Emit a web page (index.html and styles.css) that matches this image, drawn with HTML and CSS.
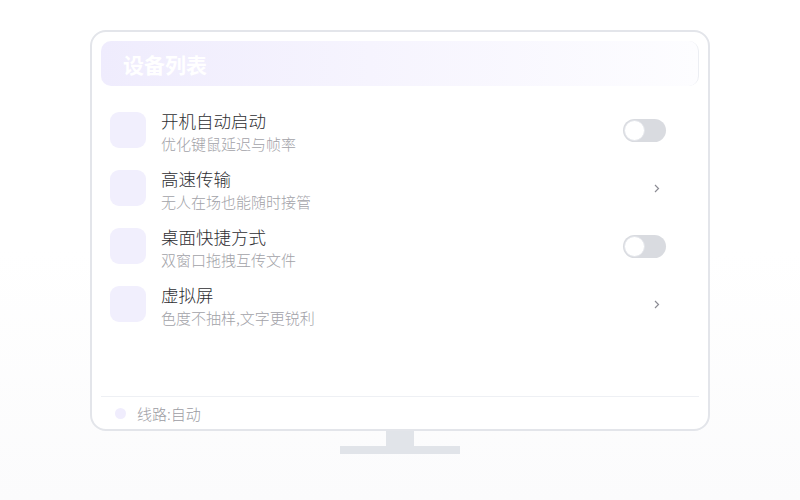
FILE: index.html
```html
<!DOCTYPE html>
<html lang="zh-CN">
<head>
    <meta charset="UTF-8">
    <meta name="viewport" content="width=device-width, initial-scale=1.0">
    <title>设备列表</title>
    <link rel="stylesheet" href="styles.css">
</head>
<body>
    <section class="stage">
        <div class="monitor">
            <div class="header">设备列表</div>
            <div class="list">
                <div class="row">
                    <div class="icon"></div>
                    <div class="text">
                        <div class="title">开机自动启动</div>
                        <div class="sub">优化键鼠延迟与帧率</div>
                    </div>
                    <div class="action"><span class="toggle"><span class="knob"></span></span></div>
                </div>
                <div class="row">
                    <div class="icon"></div>
                    <div class="text">
                        <div class="title">高速传输</div>
                        <div class="sub">无人在场也能随时接管</div>
                    </div>
                    <div class="action">
                        <svg class="chevron" width="6" height="9" viewBox="0 0 6 9"><polyline points="1,1 4.5,4.5 1,8" fill="none" stroke="#8c8c94" stroke-width="1.2"/></svg>
                    </div>
                </div>
                <div class="row">
                    <div class="icon"></div>
                    <div class="text">
                        <div class="title">桌面快捷方式</div>
                        <div class="sub">双窗口拖拽互传文件</div>
                    </div>
                    <div class="action"><span class="toggle"><span class="knob"></span></span></div>
                </div>
                <div class="row">
                    <div class="icon"></div>
                    <div class="text">
                        <div class="title">虚拟屏</div>
                        <div class="sub">色度不抽样,文字更锐利</div>
                    </div>
                    <div class="action">
                        <svg class="chevron" width="6" height="9" viewBox="0 0 6 9"><polyline points="1,1 4.5,4.5 1,8" fill="none" stroke="#8c8c94" stroke-width="1.2"/></svg>
                    </div>
                </div>
            </div>
            <div class="footer">
                <span class="dot"></span>
                <span>线路:自动</span>
            </div>
        </div>
        <div class="neck"></div>
        <div class="base"></div>
    </section>
</body>
</html>
```

FILE: styles.css
```css
body {
    margin: 0;
    height: 500px;
    overflow: hidden;
    font-family: "Noto Sans CJK SC", "Noto Sans", sans-serif;
    background: linear-gradient(#ffffff 0%, #ffffff 50%, #fbfbfc 100%);
}
.stage {
    display: flex;
    flex-direction: column;
    align-items: center;
    padding-top: 30px;
}
.monitor {
    box-sizing: border-box;
    width: 620px;
    height: 401px;
    border: 2px solid #e3e5ea;
    border-radius: 16px;
    background: #fff;
    padding: 9px 9px 0;
    display: flex;
    flex-direction: column;
}
.header {
    height: 45px;
    border-radius: 10px;
    border-right: 1px solid #eceef3;
    background: linear-gradient(90deg, #efecfd 0%, #f6f4fe 45%, #fdfdff 100%);
    color: #ffffff;
    font-size: 21px;
    font-weight: bold;
    padding-left: 22px;
    display: flex;
    align-items: center;
}
.list {
    flex: 1;
    padding: 15px 33px 0 9px;
}
.row {
    height: 58px;
    display: flex;
    align-items: center;
}
.icon {
    width: 36px;
    height: 36px;
    border-radius: 9px;
    background: #f1effd;
    margin-right: 15px;
}
.text {
    flex: 1;
    padding-top: 3px;
}
.title {
    font-size: 17.5px;
    line-height: 24px;
    font-weight: 300;
    color: #2e2e32;
}
.sub {
    font-size: 15px;
    line-height: 20px;
    margin-top: 1px;
    font-weight: 300;
    color: #a2a2a8;
}
.action {
    width: 43px;
    display: flex;
    justify-content: flex-end;
}
.toggle {
    box-sizing: border-box;
    width: 43px;
    height: 23px;
    border-radius: 12px;
    background: #d9dbe0;
    padding: 1px;
}
.knob {
    display: block;
    box-sizing: border-box;
    width: 21px;
    height: 21px;
    border-radius: 50%;
    background: #fff;
    border: 1px solid #e3e5ea;
}
.chevron {
    margin-right: 6px;
}
.footer {
    height: 32px;
    border-top: 1px solid #eef0f4;
    padding-left: 14px;
    display: flex;
    align-items: center;
    gap: 11px;
    font-size: 15px;
    font-weight: 300;
    color: #9c9ca3;
}
.dot {
    width: 11px;
    height: 11px;
    border-radius: 50%;
    background: #f0edfd;
}
.neck {
    width: 28px;
    height: 15px;
    background: #e1e4e9;
}
.base {
    width: 120px;
    height: 8px;
    background: #e1e4e9;
}
```
